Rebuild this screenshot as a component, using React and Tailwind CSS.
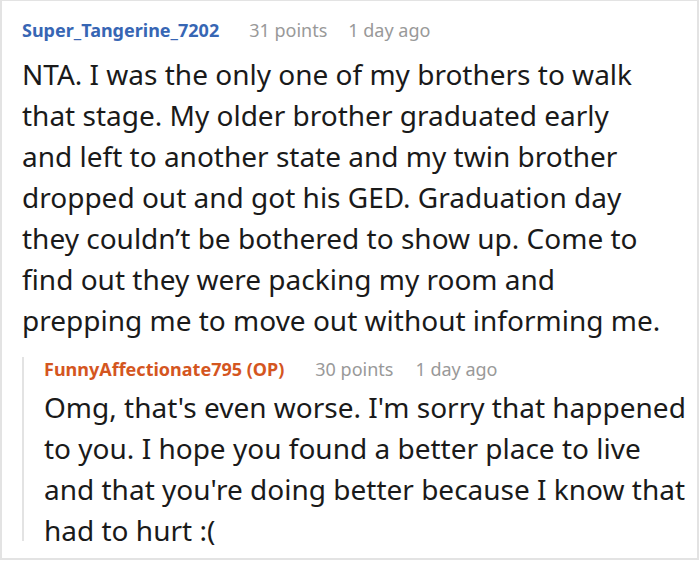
export default function App() {
  const font = { fontFamily: '"Noto Sans", "Open Sans", sans-serif' };
  return (
    <div className="w-[700px] h-[562px] bg-white" style={font}>
      <div className="w-[699px] h-[560px] border-2 border-t border-[#e3e3e3] pl-[20px] pt-[17px] text-[#1a1a1a]">
        <div className="flex items-center h-[24px] text-[18px]">
          <span className="font-bold text-[#3766b4]">Super_Tangerine_7202</span>
          <span className="ml-[30px] text-[#999999]">31 points</span>
          <span className="ml-[21px] text-[#999999]">1 day ago</span>
        </div>
        <p className="mt-[12px] text-[28px] leading-[41px] w-[680px]">
          NTA. I was the only one of my brothers to walk<br />
          that stage. My older brother graduated early<br />
          and left to another state and my twin brother<br />
          dropped out and got his GED. Graduation day<br />
          they couldn’t be bothered to show up. Come to<br />
          find out they were packing my room and<br />
          prepping me to move out without informing me.
        </p>
        <div className="mt-[16px] border-l-2 border-[#e3e3e3] pl-[20px] pr-[4px] h-[184px] overflow-visible">
          <div className="flex items-center h-[24px] text-[18px]">
            <span className="font-bold text-[#d4561f]">FunnyAffectionate795 (OP)</span>
            <span className="ml-[31px] text-[#999999]">30 points</span>
            <span className="ml-[22px] text-[#999999]">1 day ago</span>
          </div>
          <p className="mt-[6px] text-[28px] leading-[41px] whitespace-nowrap">
            Omg, that's even worse. I'm sorry that happened<br />
            to you. I hope you found a better place to live<br />
            and that you're doing better because I know that<br />
            had to hurt :(
          </p>
        </div>
      </div>
    </div>
  );
}
